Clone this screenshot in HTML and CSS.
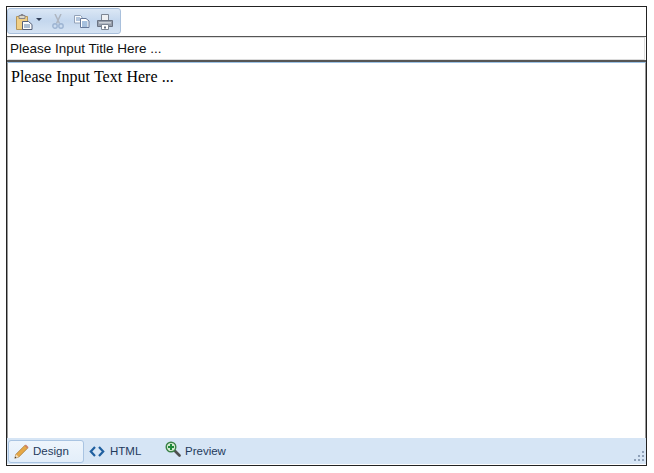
FILE: index.html
```html
<!DOCTYPE html>
<html lang="en">
<head>
<meta charset="utf-8">
<title>Editor</title>
<link rel="stylesheet" href="styles.css">
</head>
<body>
<div class="editor">
  <div class="toolbar">
    <div class="group">
      <svg class="ic paste" width="17" height="16" viewBox="0 0 17 16">
        <path d="M.5 2.500h11v13H.5z" fill="#f0cf86" stroke="#b6965a"/>
        <path d="M3 1.500h6v3H3z" fill="#dcd8c8" stroke="#86858a"/>
        <path d="M5 .5h2v1H5z" fill="none" stroke="#86858a"/>
        <path d="M6.500 7.500h6l3.500 3v5H6.500z" fill="#fbfcfd" stroke="#566078"/>
        <path d="M8 11h6M8 13h6" stroke="#5f80a8"/>
      </svg>
      <span class="caret"></span>
      <svg class="ic cut" width="12" height="15" viewBox="0 0 12 15">
        <path d="M3 0l4.500 9.500M9 0L4.500 9.500" stroke="#aeb5c0" stroke-width="1.500" fill="none"/>
        <circle cx="3" cy="12" r="2.200" fill="none" stroke="#9db4d2" stroke-width="1.400"/>
        <circle cx="9" cy="12" r="2.200" fill="none" stroke="#9db4d2" stroke-width="1.400"/>
      </svg>
      <svg class="ic copy" width="16" height="13" viewBox="0 0 16 13">
        <path d="M.5.500h6l1.500 1.500v6H.5z" fill="#f8fafc" stroke="#93a2b8"/>
        <path d="M2 3h4M2 5h4" stroke="#6d90bd"/>
        <path d="M6.500 3.500h5.500l3 2.500v6.500H6.500z" fill="#fff" stroke="#67799a"/>
        <path d="M8 7h5.500M8 9h5.500M8 11h5.500" stroke="#4d80bb"/>
      </svg>
      <svg class="ic print" width="16" height="16" viewBox="0 0 16 16">
        <path d="M4.500 .5h7v6h-7z" fill="#eef0f3" stroke="#7d8694"/>
        <path d="M.5 6.500h15v6H.5z" fill="#969eab" stroke="#6b7382"/>
        <path d="M2 8h12v1.500H2z" fill="#ccd1d8"/>
        <path d="M4.500 10.500h7v5h-7z" fill="#fff" stroke="#7d8694"/>
        <path d="M7 12.500h2v2H7z" fill="#6b7382"/>
      </svg>
    </div>
  </div>
  <div class="title-row"><div class="title-input">Please Input Title Here ...</div></div>
  <div class="body-area">Please Input Text Here ...</div>
  <div class="tabs">
    <div class="tab tab-active">
      <svg width="15" height="15" viewBox="0 0 15 15">
        <path d="M.8 14.200l1.200-4L10.800 1.400l2.800 2.800L4.800 13z" fill="#e6a846" stroke="#a0722f" stroke-width=".7"/>
        <path d="M.8 14.200l1.200-4 2.800 2.800z" fill="#f3dfc0"/>
        <path d="M.8 14.200l.5-1.700 1.200 1.200z" fill="#333"/>
        <path d="M10.800 1.400l2.800 2.800 1-1L11.800.4z" fill="#cf7a60"/>
      </svg>
      <span>Design</span>
    </div>
    <div class="tab tab-html">
      <svg width="16" height="11" viewBox="0 0 16 11">
        <path d="M6 1L1.800 5.500 6 10M10 1l4.200 4.500L10 10" fill="none" stroke="#1f5f9f" stroke-width="2.200"/>
      </svg>
      <span>HTML</span>
    </div>
    <div class="tab tab-preview">
      <svg class="zoom-ic" width="16" height="16" viewBox="0 0 16 16">
        <path d="M9.500 9.500l5 5" stroke="#4f4f4f" stroke-width="2.600" stroke-linecap="round"/>
        <circle cx="6" cy="6" r="4.800" fill="#d4ead0" stroke="#3a8046" stroke-width="1.400"/>
        <path d="M6 3v6M3 6h6" stroke="#1f8a3a" stroke-width="2"/>
      </svg>
      <span>Preview</span>
    </div>
    <div class="spacer"></div>
    <svg class="grip" width="11" height="10" viewBox="0 0 11 10">
      <path d="M8 0h2v2H8zM4 4h2v2H4zM8 4h2v2H8zM0 8h2v2H0zM4 8h2v2H4zM8 8h2v2H8z" fill="#8ea0b8"/>
    </svg>
  </div>
</div>
</body>
</html>
```
FILE: styles.css
```css
html, body { margin: 0; padding: 0; background: #fff; }
html { height: 473px; }
body { padding: 6px 0 0 6px; height: 473px; box-sizing: border-box; width: 654px; overflow: hidden; }
.editor {
  width: 641px; height: 460px; box-sizing: border-box;
  border: 1px solid #222; display: flex; flex-direction: column;
  background: #fff;
}
.toolbar { height: 30px; box-sizing: border-box; border-bottom: 1px solid #555; padding-top: 1px; flex: none; }
.group {
  width: 114px; height: 26px; box-sizing: border-box;
  border: 1px solid #a9c0dc; border-radius: 3px;
  background: linear-gradient(#dbe7f5, #c4d7ee 50%, #d6e4f4);
  display: flex; align-items: center; padding-left: 8px;
}
.ic { flex: none; display: block; }
.caret { width: 0; height: 0; border: 3px solid transparent; border-top: 3px solid #33415a; border-bottom: 0; margin-left: 3px; margin-right: 10px; margin-top: -4px; }
.paste, .print { margin-top: 1px; }
.copy { margin-left: 10px; }
.print { margin-left: 7px; }
.title-row { height: 25px; box-sizing: border-box; border-bottom: 2px solid #555; flex: none; padding-right: 1px; }
.title-input {
  height: 23px; box-sizing: border-box; border: 1px solid #dcdcdc;
  font: 13.5px/22px "Liberation Sans", Arial, sans-serif; color: #111; padding-left: 2px;
}
.body-area {
  flex: 1; border-top: 1px solid #9dc3e6; padding: 4px 3px;
  font: 16px/20px "Liberation Serif", "Times New Roman", serif; color: #000; word-spacing: .3px;
  border-left: 1px solid #999; border-right: 1px solid #999;
}
.tabs {
  height: 27px; flex: none; background: #d6e5f5; border-bottom: 1px solid #fff; box-sizing: border-box;
  display: flex; align-items: center; padding-left: 1px;
  font: 11.5px "Liberation Sans", Arial, sans-serif; color: #1e3a5c;
}
.tab { display: flex; align-items: center; height: 23px; box-sizing: border-box; }
.tab-active {
  width: 76px; border: 1px solid #a9c4e2; border-radius: 3px; background: linear-gradient(#eef5fc, #e3eefa);
  padding-left: 5px; gap: 4px;
}
.tab-html { margin-left: 5px; gap: 5px; width: 76px; }
.tab-preview { gap: 4px; }
.zoom-ic { margin-top: -4px; }
.spacer { flex: 1; }
.grip { margin-right: 1px; margin-top: 10px; }
```
